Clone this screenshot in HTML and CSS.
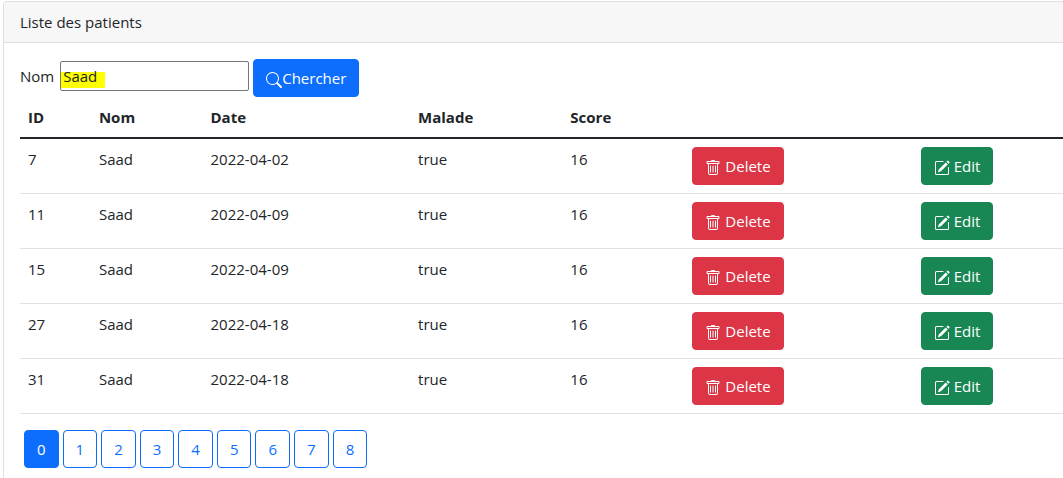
FILE: index.html
```html
<!DOCTYPE html>
<html lang="fr">
<head>
<meta charset="utf-8">
<title>Liste des patients</title>
<link rel="stylesheet" href="styles.css">
</head>
<body>
<svg class="sprite" aria-hidden="true">
  <symbol id="trash" viewBox="0 0 16 16"><path d="M5.500 5.500A.5.5 0 0 1 6 6v6a.5.5 0 0 1-1 0V6a.5.5 0 0 1 .5-.5zm2.500 0a.5.5 0 0 1 .5.5v6a.5.5 0 0 1-1 0V6a.5.5 0 0 1 .5-.5zm3 .5a.5.5 0 0 0-1 0v6a.5.5 0 0 0 1 0V6z"/><path fill-rule="evenodd" d="M14.500 3a1 1 0 0 1-1 1H13v9a2 2 0 0 1-2 2H5a2 2 0 0 1-2-2V4h-.5a1 1 0 0 1-1-1V2a1 1 0 0 1 1-1H6a1 1 0 0 1 1-1h2a1 1 0 0 1 1 1h3.500a1 1 0 0 1 1 1v1zM4.118 4 4 4.059V13a1 1 0 0 0 1 1h6a1 1 0 0 0 1-1V4.059L11.882 4H4.118zM2.500 3V2h11v1h-11z"/></symbol>
  <symbol id="pencil" viewBox="0 0 16 16"><path d="M15.502 1.940a.5.5 0 0 1 0 .706L14.459 3.690l-2-2L13.502.646a.5.5 0 0 1 .707 0l1.293 1.293zm-1.750 2.456-2-2L4.939 9.210a.5.5 0 0 0-.121.196l-.805 2.414a.25.25 0 0 0 .316.316l2.414-.805a.5.5 0 0 0 .196-.120l6.813-6.814z"/><path fill-rule="evenodd" d="M1 13.500A1.500 1.500 0 0 0 2.500 15h11a1.500 1.500 0 0 0 1.500-1.500v-6a.5.5 0 0 0-1 0v6a.5.5 0 0 1-.5.5h-11a.5.5 0 0 1-.5-.5v-11a.5.5 0 0 1 .5-.5H9a.5.5 0 0 0 0-1H2.500A1.500 1.500 0 0 0 1 2.500v11z"/></symbol>
  <symbol id="search" viewBox="0 0 16 16"><path d="M11.742 10.344a6.500 6.500 0 1 0-1.397 1.398h-.001c.030.040.062.078.098.115l3.850 3.850a1 1 0 0 0 1.415-1.414l-3.850-3.850a1.007 1.007 0 0 0-.115-.100zM12 6.500a5.500 5.500 0 1 1-11 0 5.500 5.500 0 0 1 11 0z"/></symbol>
</svg>
<main class="card">
  <header class="card-header">Liste des patients</header>
  <div class="card-body">
    <form class="search-form">
      <div class="field">
        <label for="nom">Nom</label>
        <input class="search-input" id="nom" type="text" value="Saad">
      </div>
      <button class="btn btn-primary" type="button"><svg class="icon"><use href="#search"/></svg>Chercher</button>
    </form>
    <table class="table">
      <colgroup><col class="col-id"><col class="col-nom"><col class="col-date"><col class="col-malade"><col class="col-score"><col class="col-delete"><col></colgroup>
      <thead>
        <tr><th>ID</th><th>Nom</th><th>Date</th><th>Malade</th><th>Score</th><th></th><th></th></tr>
      </thead>
      <tbody>
        <tr><td>7</td><td>Saad</td><td>2022-04-02</td><td>true</td><td>16</td><td><a class="btn btn-danger" href="#"><svg class="icon"><use href="#trash"/></svg> Delete</a></td><td><a class="btn btn-success" href="#"><svg class="icon"><use href="#pencil"/></svg> Edit</a></td></tr>
        <tr><td>11</td><td>Saad</td><td>2022-04-09</td><td>true</td><td>16</td><td><a class="btn btn-danger" href="#"><svg class="icon"><use href="#trash"/></svg> Delete</a></td><td><a class="btn btn-success" href="#"><svg class="icon"><use href="#pencil"/></svg> Edit</a></td></tr>
        <tr><td>15</td><td>Saad</td><td>2022-04-09</td><td>true</td><td>16</td><td><a class="btn btn-danger" href="#"><svg class="icon"><use href="#trash"/></svg> Delete</a></td><td><a class="btn btn-success" href="#"><svg class="icon"><use href="#pencil"/></svg> Edit</a></td></tr>
        <tr><td>27</td><td>Saad</td><td>2022-04-18</td><td>true</td><td>16</td><td><a class="btn btn-danger" href="#"><svg class="icon"><use href="#trash"/></svg> Delete</a></td><td><a class="btn btn-success" href="#"><svg class="icon"><use href="#pencil"/></svg> Edit</a></td></tr>
        <tr><td>31</td><td>Saad</td><td>2022-04-18</td><td>true</td><td>16</td><td><a class="btn btn-danger" href="#"><svg class="icon"><use href="#trash"/></svg> Delete</a></td><td><a class="btn btn-success" href="#"><svg class="icon"><use href="#pencil"/></svg> Edit</a></td></tr>
      </tbody>
    </table>
    <nav class="pages" aria-label="Pages">
      <a class="btn btn-primary" href="#" aria-current="page">0</a>
      <a class="btn btn-outline" href="#">1</a>
      <a class="btn btn-outline" href="#">2</a>
      <a class="btn btn-outline" href="#">3</a>
      <a class="btn btn-outline" href="#">4</a>
      <a class="btn btn-outline" href="#">5</a>
      <a class="btn btn-outline" href="#">6</a>
      <a class="btn btn-outline" href="#">7</a>
      <a class="btn btn-outline" href="#">8</a>
    </nav>
  </div>
</main>
</body>
</html>
```
FILE: styles.css
```css
* {
  box-sizing: border-box;
}

body {
  margin: 0;
  padding: 1px 0 0 3px;
  background: #fff;
  color: #212529;
  font: 15px/24px "Open Sans", "Noto Sans", sans-serif;
}

.sprite {
  display: none;
}

.card {
  min-height: calc(100vh - 1px);
  border: 1px solid #dfdfdf;
  border-right: 0;
  border-bottom: 0;
  border-radius: 4px 0 0 0;
}

.card-header {
  padding: 8px 16px;
  background: #f7f7f7;
  border-bottom: 1px solid #dfdfdf;
  border-radius: 3px 0 0 0;
}

.card-body {
  padding: 16px 0 0 16px;
}

.search-form {
  display: flex;
  align-items: flex-start;
  gap: 4px;
}

.field {
  display: flex;
  align-items: center;
  gap: 6px;
  margin-top: 2px;
}

.search-input {
  width: 189px;
  height: 30px;
  padding: 1px 2px;
  border: 1px solid #767676;
  border-radius: 2px;
  background: linear-gradient(#ff0, #ff0) 0 10px / 44px 16px no-repeat #fff;
  color: #212529;
  font: inherit;
}

.btn {
  display: inline-flex;
  align-items: center;
  gap: 4px;
  height: 38px;
  padding: 6px 12px;
  border: 1px solid transparent;
  border-radius: 4px;
  color: #fff;
  font: inherit;
  text-decoration: none;
  vertical-align: top;
}

.search-form .btn {
  gap: 0;
}

.btn-primary {
  background: #0d6efd;
  border-color: #0d6efd;
}

.btn-danger {
  background: #dc3545;
  border-color: #dc3545;
}

.btn-success {
  background: #198754;
  border-color: #198754;
}

.btn-outline {
  border-color: #0d6efd;
  color: #0d6efd;
}

.icon {
  width: 16px;
  height: 16px;
  margin-top: 4px;
  fill: currentColor;
}

.table {
  width: 100%;
  margin-bottom: 16px;
  border-collapse: separate;
  border-spacing: 0;
  table-layout: fixed;
}

.table th,
.table td {
  padding: 8px;
  border-bottom: 1px solid #dee2e6;
  text-align: left;
  vertical-align: top;
}

.table th {
  border-bottom: 2px solid #212529;
}

.col-id { width: 6.8%; }
.col-nom { width: 10.7%; }
.col-date { width: 19.9%; }
.col-malade { width: 14.6%; }
.col-score { width: 11.7%; }
.col-delete { width: 21.9%; }

.pages {
  display: flex;
  gap: 4px;
  padding-left: 4px;
}
```
